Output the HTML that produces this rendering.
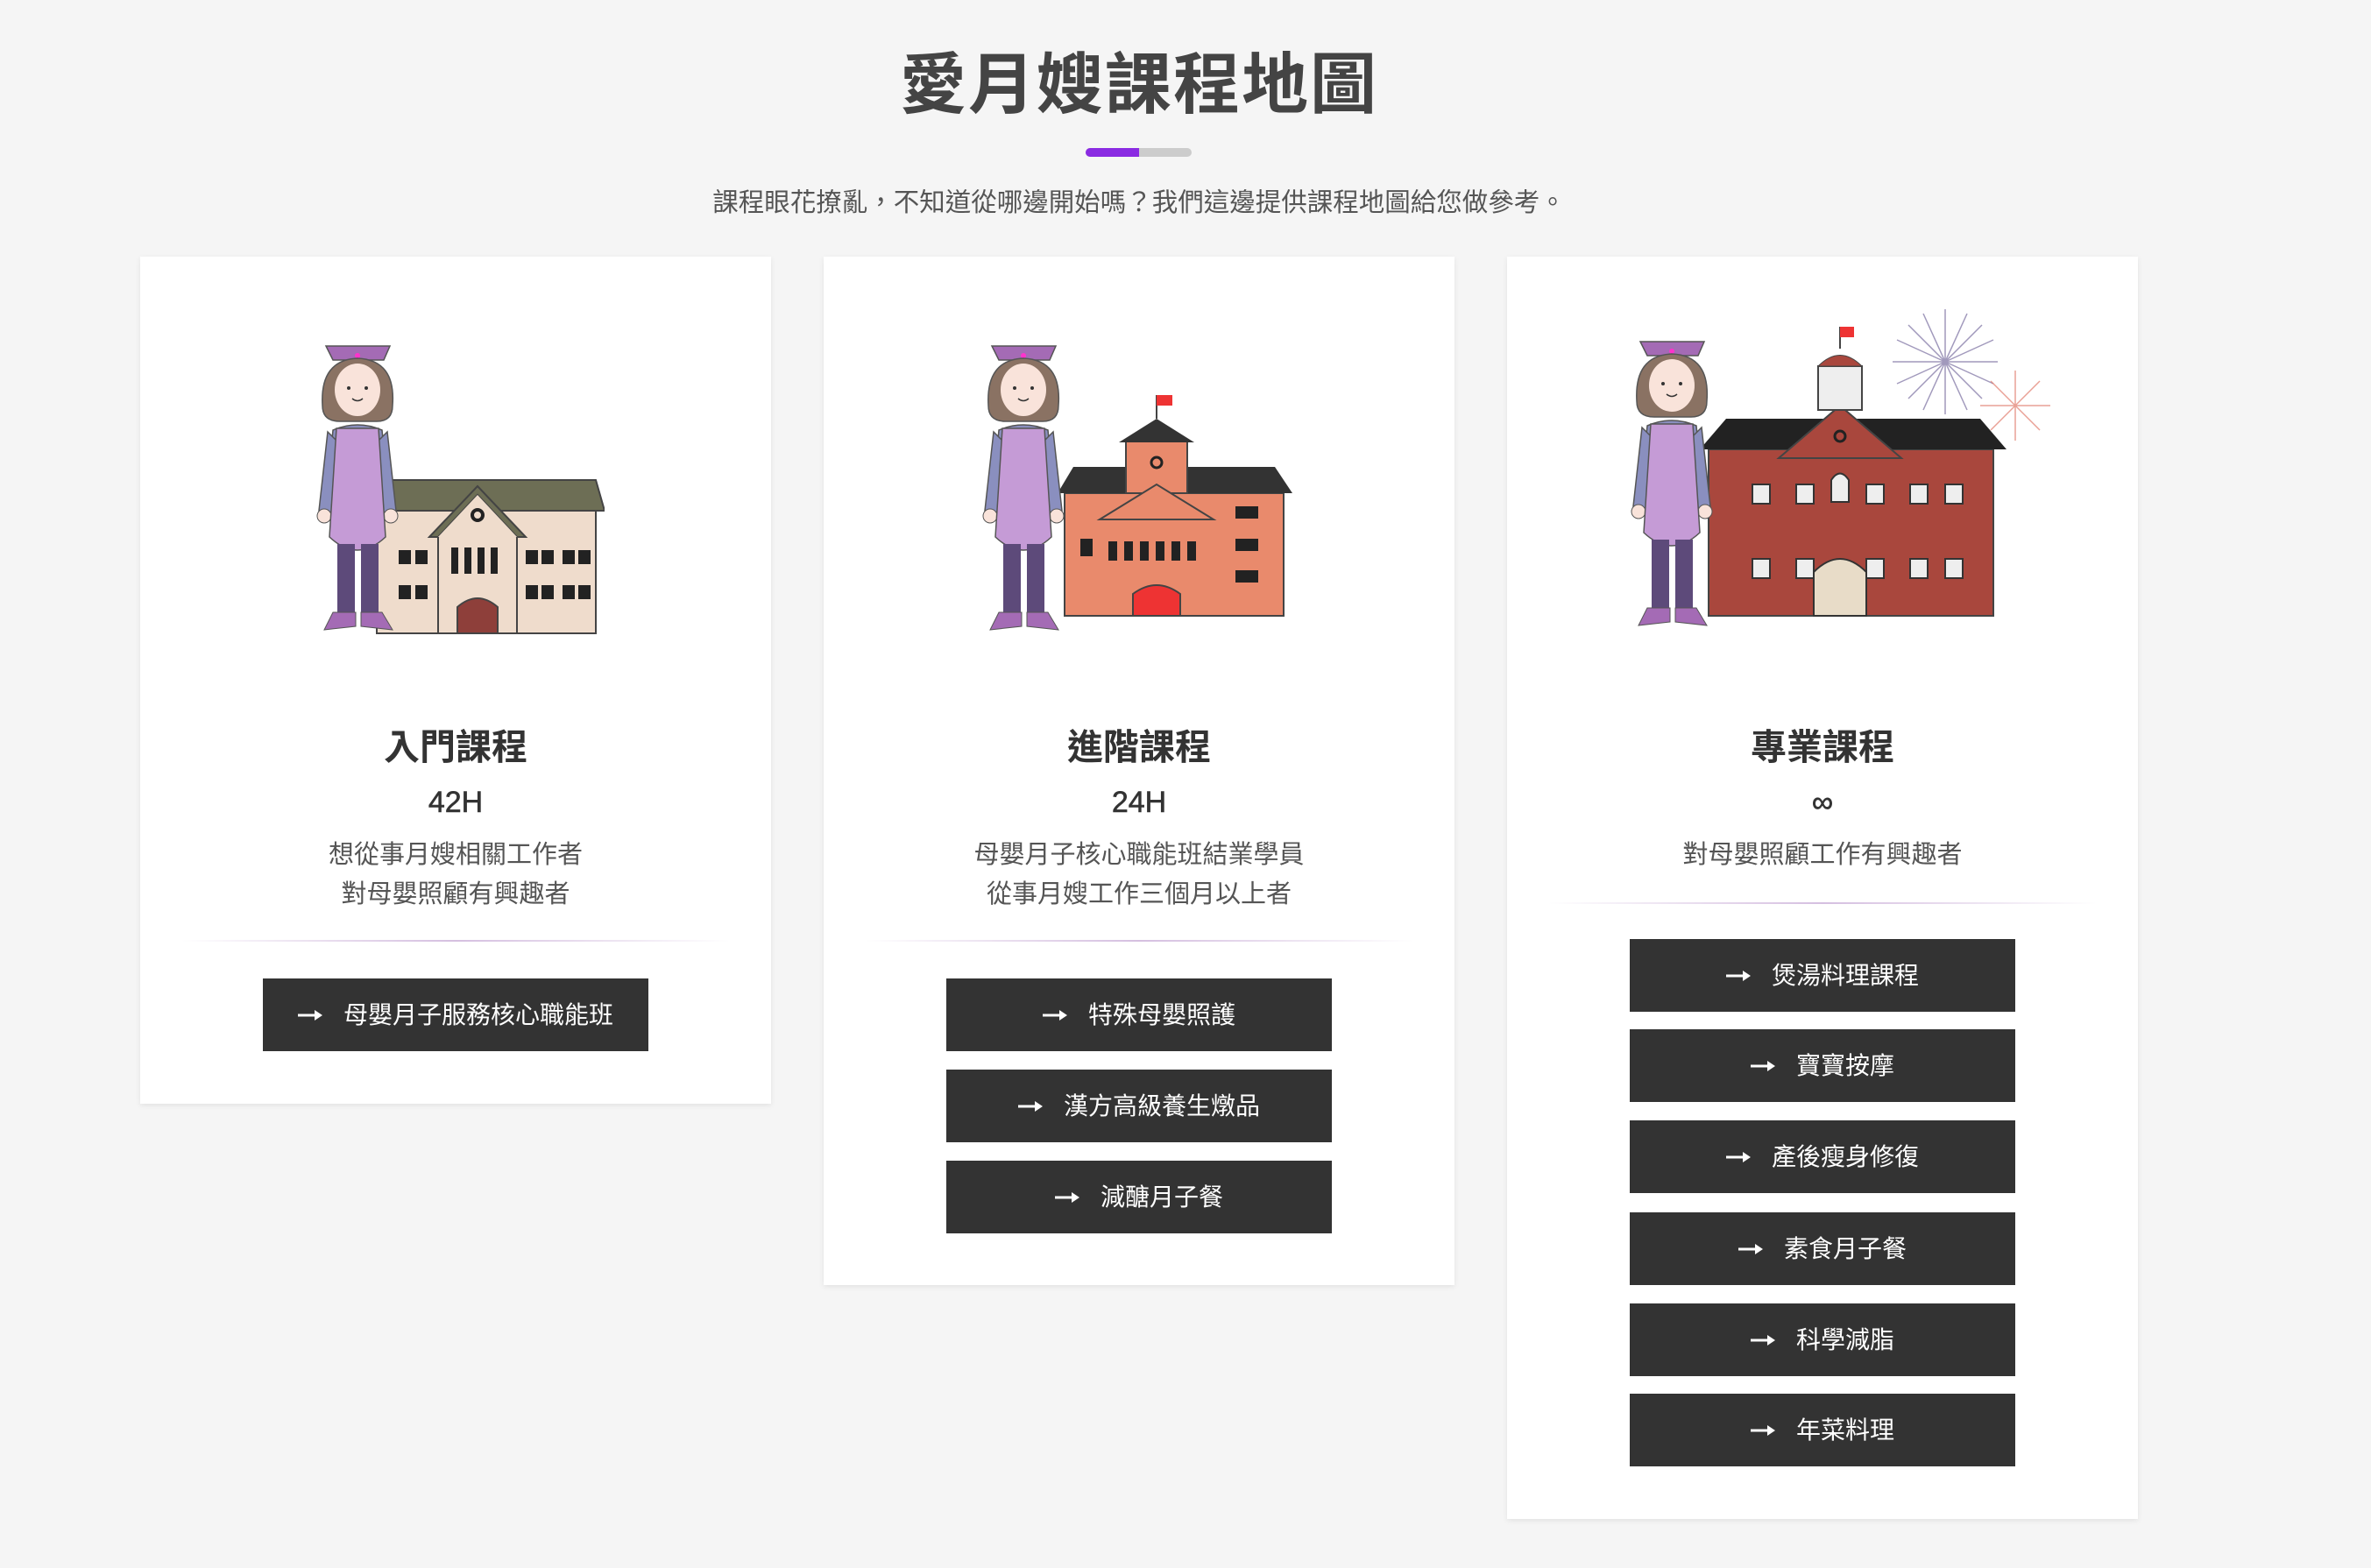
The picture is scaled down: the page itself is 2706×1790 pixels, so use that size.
<!DOCTYPE html>
<html><head><meta charset="utf-8">
<style>
*{margin:0;padding:0;box-sizing:border-box}
html,body{width:2706px;height:1790px;background:#f5f5f5;overflow:hidden;font-family:"Liberation Sans","Noto Sans CJK TC",sans-serif;color:#333}
.abs{position:absolute}
h1{position:absolute;left:0;width:2600px;top:48px;text-align:center;font-size:76px;font-weight:700;color:#444;letter-spacing:2px;line-height:100px}
.bar{position:absolute;top:169px;left:1239px;width:121px;height:10px;border-radius:5px;background:#ccc;overflow:hidden}
.bar i{position:absolute;left:0;top:0;width:61px;height:10px;background:#8a2be2}
.sub{position:absolute;left:0;width:2600px;top:210px;text-align:center;font-size:29.5px;color:#555;line-height:44px}
.card{position:absolute;top:293px;width:720px;background:#fff;box-shadow:0 2px 6px rgba(0,0,0,.08)}
.t{position:absolute;left:0;width:720px;text-align:center;font-size:41px;font-weight:700;color:#333;line-height:60px;top:530px}
.h{position:absolute;left:0;width:720px;text-align:center;font-size:34px;font-weight:500;color:#333;line-height:50px;top:598px;-webkit-text-stroke:.6px #333}
.d{position:absolute;left:0;width:720px;text-align:center;font-size:29px;color:#555;line-height:45px;top:661px}
.line{position:absolute;left:47px;width:626px;height:2px;background:linear-gradient(90deg,rgba(230,220,235,0),#d5bfe0 50%,rgba(230,220,235,0))}
.btn{position:absolute;left:140px;width:440px;height:83px;background:#333;color:#fff;font-size:28px;display:flex;align-items:center;justify-content:center;line-height:83px}
.btn svg{margin-right:24px}
</style></head><body>
<svg width="0" height="0" style="position:absolute">
<defs>
<g id="arr"><path d="M0 9H22" stroke="#fff" stroke-width="3"/><path d="M19 3L28 9L19 15Z" fill="#fff"/></g>
<g id="woman">
<path d="M12 2L85 2L78 18L20 18Z" fill="#a46bb5" stroke="#555" stroke-width="1.5"/>
<path d="M48 10a3 3 0 1 0 .1 0" fill="#f3c"/>
<path d="M8 70Q5 18 48 16Q92 18 88 70Q88 88 70 88L28 88Q8 88 8 70Z" fill="#8a7263" stroke="#555" stroke-width="1.5"/>
<ellipse cx="48" cy="52" rx="26" ry="30" fill="#f9e3da"/>
<circle cx="38" cy="50" r="2" fill="#333"/><circle cx="58" cy="50" r="2" fill="#333"/>
<path d="M42 62Q48 67 54 62" stroke="#333" stroke-width="1.5" fill="none"/>
<path d="M20 98Q48 86 76 98L84 180L12 180Z" fill="#8a8fbf" stroke="#555" stroke-width="1.5"/>
<path d="M14 100L4 190L18 192L24 110Z" fill="#8a8fbf" stroke="#555" stroke-width="1.5"/>
<path d="M82 100L92 190L78 192L72 110Z" fill="#8a8fbf" stroke="#555" stroke-width="1.5"/>
<circle cx="10" cy="196" r="8" fill="#f9e3da" stroke="#555"/><circle cx="86" cy="196" r="8" fill="#f9e3da" stroke="#555"/>
<path d="M24 96L72 96L80 220Q48 250 16 220Z" fill="#c59bd6" stroke="#555" stroke-width="1.5"/>
<rect x="25" y="228" width="20" height="82" fill="#5d4a7a"/><rect x="52" y="228" width="20" height="82" fill="#5d4a7a"/>
<path d="M20 306L46 306L46 322L10 326Z" fill="#a46bb5" stroke="#555"/><path d="M52 306L76 306L88 326L52 322Z" fill="#a46bb5" stroke="#555"/>
</g>
</defs></svg>

<h1>愛月嫂課程地圖</h1>
<div class="bar"><i></i></div>
<div class="sub">課程眼花撩亂，不知道從哪邊開始嗎？我們這邊提供課程地圖給您做參考。</div>

<div class="card" style="left:160px;height:967px">
 <svg class="abs" style="left:190px;top:100px" width="340" height="340" viewBox="0 0 340 340">
  <rect x="80" y="190" width="250" height="140" fill="#efdccc" stroke="#444" stroke-width="2"/>
  <path d="M70 190L90 155L330 155L340 190Z" fill="#6d6e55" stroke="#444" stroke-width="2"/>
  <path d="M150 215L150 330L240 330L240 215Z" fill="#efdccc" stroke="#444" stroke-width="2"/>
  <path d="M140 220L195 162L250 220L240 220L195 172L150 220Z" fill="#6d6e55" stroke="#444" stroke-width="2"/>
  <path d="M150 220L195 172L240 220Z" fill="#efdccc"/>
  <circle cx="195" cy="195" r="6" fill="none" stroke="#222" stroke-width="4"/>
  <g fill="#222"><rect x="165" y="232" width="8" height="30"/><rect x="180" y="232" width="8" height="30"/><rect x="195" y="232" width="8" height="30"/><rect x="210" y="232" width="8" height="30"/>
  <rect x="250" y="235" width="14" height="16"/><rect x="268" y="235" width="14" height="16"/><rect x="292" y="235" width="14" height="16"/><rect x="310" y="235" width="14" height="16"/>
  <rect x="250" y="275" width="14" height="16"/><rect x="268" y="275" width="14" height="16"/><rect x="292" y="275" width="14" height="16"/><rect x="310" y="275" width="14" height="16"/>
  <rect x="105" y="235" width="14" height="16"/><rect x="124" y="235" width="14" height="16"/><rect x="105" y="275" width="14" height="16"/><rect x="124" y="275" width="14" height="16"/></g>
  <path d="M172 330L172 300Q195 280 218 300L218 330Z" fill="#8e3f3a" stroke="#444" stroke-width="2"/>
  <use href="#woman" x="10" y="0"/>
 </svg>
 <div class="t">入門課程</div>
 <div class="h">42H</div>
 <div class="d">想從事月嫂相關工作者<br>對母嬰照顧有興趣者</div>
 <div class="line" style="top:780px"></div>
 <div class="btn" style="top:824px"><svg width="28" height="18"><use href="#arr"/></svg>母嬰月子服務核心職能班</div>
</div>

<div class="card" style="left:940px;height:1174px">
 <svg class="abs" style="left:175px;top:100px" width="370" height="340" viewBox="0 0 370 340">
  <rect x="100" y="170" width="250" height="140" fill="#e98a6c" stroke="#444" stroke-width="2"/>
  <path d="M92 170L110 140L340 140L360 170Z" fill="#333"/>
  <rect x="170" y="110" width="70" height="60" fill="#e98a6c" stroke="#444" stroke-width="2"/>
  <path d="M162 112L205 85L248 112Z" fill="#333"/>
  <path d="M205 85L205 58" stroke="#444" stroke-width="2"/><rect x="205" y="58" width="18" height="12" fill="#e33"/>
  <circle cx="205" cy="135" r="6" fill="none" stroke="#222" stroke-width="3"/>
  <path d="M140 200L205 160L270 200Z" fill="#e98a6c" stroke="#444" stroke-width="2"/>
  <g fill="#222"><rect x="150" y="225" width="10" height="22"/><rect x="168" y="225" width="10" height="22"/><rect x="186" y="225" width="10" height="22"/><rect x="204" y="225" width="10" height="22"/><rect x="222" y="225" width="10" height="22"/><rect x="240" y="225" width="10" height="22"/>
  <rect x="295" y="185" width="26" height="14"/><rect x="295" y="222" width="26" height="14"/><rect x="295" y="258" width="26" height="14"/>
  <rect x="118" y="222" width="14" height="20"/></g>
  <path d="M178 310L178 285Q205 265 232 285L232 310Z" fill="#e33" stroke="#444" stroke-width="2"/>
  <use href="#woman" x="5" y="0"/>
 </svg>
 <div class="t">進階課程</div>
 <div class="h">24H</div>
 <div class="d">母嬰月子核心職能班結業學員<br>從事月嫂工作三個月以上者</div>
 <div class="line" style="top:780px"></div>
 <div class="btn" style="top:824px"><svg width="28" height="18"><use href="#arr"/></svg>特殊母嬰照護</div>
 <div class="btn" style="top:928px"><svg width="28" height="18"><use href="#arr"/></svg>漢方高級養生燉品</div>
 <div class="btn" style="top:1032px"><svg width="28" height="18"><use href="#arr"/></svg>減醣月子餐</div>
</div>

<div class="card" style="left:1720px;height:1441px">
 <svg class="abs" style="left:140px;top:40px" width="540" height="400" viewBox="0 0 540 400">
  <g stroke="#7a6fa0" stroke-width="1.5" opacity=".7">
   <path d="M360 20L360 140M300 80L420 80M318 38L402 122M402 38L318 122M335 25L385 135M385 25L335 135M305 55L415 105M305 105L415 55"/>
  </g>
  <g stroke="#e07a6a" stroke-width="1.5" opacity=".7">
   <path d="M440 90L440 170M400 130L480 130M412 102L468 158M468 102L412 158"/>
  </g>
  <rect x="90" y="180" width="325" height="190" fill="#a9473d" stroke="#444" stroke-width="2"/>
  <path d="M80 180L110 145L400 145L430 180Z" fill="#222"/>
  <path d="M170 190L240 130L310 190Z" fill="#a9473d" stroke="#444" stroke-width="2"/>
  <rect x="215" y="85" width="50" height="50" fill="#eee" stroke="#444" stroke-width="2"/>
  <path d="M215 85Q240 60 265 85Z" fill="#a9473d" stroke="#444"/>
  <path d="M240 65L240 40" stroke="#444" stroke-width="2"/><rect x="240" y="40" width="16" height="12" fill="#e33"/>
  <circle cx="240" cy="165" r="6" fill="none" stroke="#222" stroke-width="3"/>
  <g fill="#eee" stroke="#333" stroke-width="2">
   <rect x="140" y="220" width="20" height="22"/><rect x="190" y="220" width="20" height="22"/><rect x="270" y="220" width="20" height="22"/><rect x="320" y="220" width="20" height="22"/><rect x="360" y="220" width="20" height="22"/>
   <rect x="140" y="305" width="20" height="22"/><rect x="190" y="305" width="20" height="22"/><rect x="270" y="305" width="20" height="22"/><rect x="320" y="305" width="20" height="22"/><rect x="360" y="305" width="20" height="22"/>
   <path d="M230 240L230 215Q240 200 250 215L250 240Z"/>
   <path d="M210 370L210 320Q240 290 270 320L270 370Z" fill="#e8dcc8"/>
  </g>
  <use href="#woman" x="0" y="55"/>
 </svg>
 <div class="t">專業課程</div>
 <div class="h">∞</div>
 <div class="d">對母嬰照顧工作有興趣者</div>
 <div class="line" style="top:737px"></div>
 <div class="btn" style="top:779px"><svg width="28" height="18"><use href="#arr"/></svg>煲湯料理課程</div>
 <div class="btn" style="top:882px"><svg width="28" height="18"><use href="#arr"/></svg>寶寶按摩</div>
 <div class="btn" style="top:986px"><svg width="28" height="18"><use href="#arr"/></svg>產後瘦身修復</div>
 <div class="btn" style="top:1091px"><svg width="28" height="18"><use href="#arr"/></svg>素食月子餐</div>
 <div class="btn" style="top:1195px"><svg width="28" height="18"><use href="#arr"/></svg>科學減脂</div>
 <div class="btn" style="top:1298px"><svg width="28" height="18"><use href="#arr"/></svg>年菜料理</div>
</div>
</body></html>
